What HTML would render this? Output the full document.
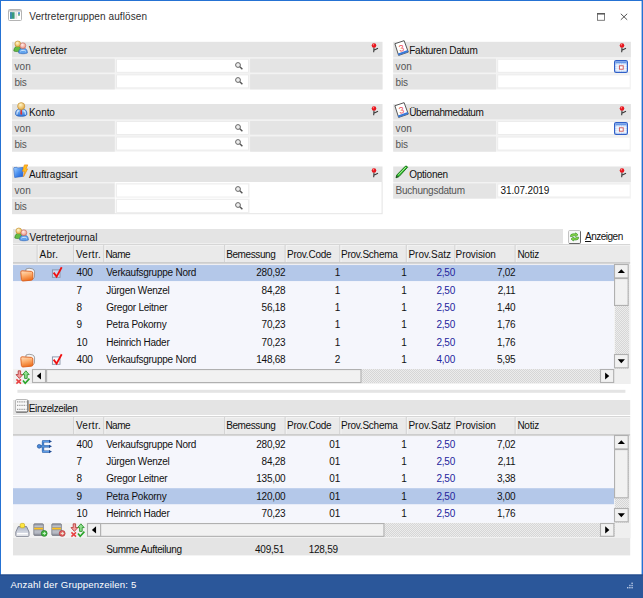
<!DOCTYPE html>
<html><head><meta charset="utf-8"><title>Vertretergruppen auflösen</title>
<style>
html,body{margin:0;padding:0;background:#fff;}
body{width:643px;height:598px;position:relative;overflow:hidden;font-family:"Liberation Sans",sans-serif;}
div,span.t,svg{position:absolute;}
svg{overflow:visible;}
.t{font-size:10px;line-height:12px;letter-spacing:-0.24px;white-space:nowrap;color:#000;}
.blk{color:#111;}
.hd{color:#262626;}
.gry{color:#555;}
.nav{color:#24249c;}
.ttl{font-size:10px;letter-spacing:0.09px;color:#303030;}
.sts{font-size:9.6px;letter-spacing:0.16px;color:#fff;}
u{text-decoration:underline;}
</style></head><body>
<svg style="left:0;top:0" width="643" height="598">
<rect x="0.00" y="0.00" width="643.00" height="1.00" fill="#2572d3"/>
<rect x="0.00" y="0.00" width="1.00" height="598.00" fill="#2572d3"/>
<rect x="641.60" y="0.00" width="1.40" height="598.00" fill="#2572d3"/>
<rect x="0.00" y="574.50" width="643.00" height="23.50" fill="#2b579a"/>
<rect x="0.00" y="574.50" width="643.00" height="1.20" fill="#254c8c"/>
<rect x="12.00" y="57.30" width="370.50" height="32.15" fill="#f3f3f3"/>
<rect x="12.00" y="41.80" width="370.50" height="15.50" fill="#e4e4e4"/>
<rect x="12.00" y="58.70" width="102.80" height="13.80" fill="#e4e4e4"/>
<rect x="116.10" y="58.90" width="132.80" height="13.80" fill="#ececec"/>
<rect x="117.00" y="59.80" width="131.00" height="12.00" fill="#fff"/>
<rect x="250.10" y="58.70" width="132.40" height="13.80" fill="#e4e4e4"/>
<rect x="12.00" y="74.25" width="102.80" height="15.20" fill="#e4e4e4"/>
<rect x="116.10" y="74.45" width="132.80" height="13.80" fill="#ececec"/>
<rect x="117.00" y="75.35" width="131.00" height="12.00" fill="#fff"/>
<rect x="250.10" y="74.25" width="132.40" height="15.20" fill="#e4e4e4"/>
<rect x="12.00" y="119.50" width="370.50" height="32.15" fill="#f3f3f3"/>
<rect x="12.00" y="104.00" width="370.50" height="15.50" fill="#e4e4e4"/>
<rect x="12.00" y="120.90" width="102.80" height="13.80" fill="#e4e4e4"/>
<rect x="116.10" y="121.10" width="132.80" height="13.80" fill="#ececec"/>
<rect x="117.00" y="122.00" width="131.00" height="12.00" fill="#fff"/>
<rect x="250.10" y="120.90" width="132.40" height="13.80" fill="#e4e4e4"/>
<rect x="12.00" y="136.45" width="102.80" height="15.20" fill="#e4e4e4"/>
<rect x="116.10" y="136.65" width="132.80" height="13.80" fill="#ececec"/>
<rect x="117.00" y="137.55" width="131.00" height="12.00" fill="#fff"/>
<rect x="250.10" y="136.45" width="132.40" height="15.20" fill="#e4e4e4"/>
<rect x="12.00" y="182.00" width="370.50" height="32.15" fill="#f3f3f3"/>
<rect x="12.00" y="166.50" width="370.50" height="15.50" fill="#e4e4e4"/>
<rect x="12.00" y="183.40" width="102.80" height="13.80" fill="#e4e4e4"/>
<rect x="114.80" y="182.00" width="267.70" height="32.15" fill="#e3e3e3"/>
<rect x="114.80" y="182.00" width="266.80" height="31.25" fill="#fff"/>
<rect x="115.70" y="183.20" width="133.80" height="14.40" fill="#efefef"/>
<rect x="117.00" y="184.50" width="131.00" height="12.00" fill="#fff"/>
<rect x="12.00" y="198.95" width="102.80" height="15.20" fill="#e4e4e4"/>
<rect x="115.70" y="198.75" width="133.80" height="14.40" fill="#efefef"/>
<rect x="117.00" y="200.05" width="131.00" height="12.00" fill="#fff"/>
<rect x="393.20" y="57.30" width="237.70" height="32.15" fill="#f3f3f3"/>
<rect x="393.20" y="41.80" width="237.70" height="15.50" fill="#e4e4e4"/>
<rect x="393.20" y="58.70" width="102.80" height="13.80" fill="#e4e4e4"/>
<rect x="497.30" y="58.90" width="132.40" height="13.80" fill="#ececec"/>
<rect x="498.20" y="59.80" width="131.50" height="12.00" fill="#fff"/>
<rect x="393.20" y="74.25" width="102.80" height="15.20" fill="#e4e4e4"/>
<rect x="497.30" y="74.45" width="132.40" height="13.80" fill="#ececec"/>
<rect x="498.20" y="75.35" width="131.50" height="12.00" fill="#fff"/>
<rect x="393.20" y="119.50" width="237.70" height="32.15" fill="#f3f3f3"/>
<rect x="393.20" y="104.00" width="237.70" height="15.50" fill="#e4e4e4"/>
<rect x="393.20" y="120.90" width="102.80" height="13.80" fill="#e4e4e4"/>
<rect x="497.30" y="121.10" width="132.40" height="13.80" fill="#ececec"/>
<rect x="498.20" y="122.00" width="131.50" height="12.00" fill="#fff"/>
<rect x="393.20" y="136.45" width="102.80" height="15.20" fill="#e4e4e4"/>
<rect x="497.30" y="136.65" width="132.40" height="13.80" fill="#ececec"/>
<rect x="498.20" y="137.55" width="131.50" height="12.00" fill="#fff"/>
<rect x="393.20" y="182.00" width="237.70" height="16.60" fill="#f3f3f3"/>
<rect x="393.20" y="166.50" width="237.70" height="15.50" fill="#e4e4e4"/>
<rect x="393.20" y="183.40" width="102.80" height="15.20" fill="#e4e4e4"/>
<rect x="497.30" y="183.60" width="132.40" height="13.80" fill="#ececec"/>
<rect x="498.20" y="184.50" width="131.50" height="12.00" fill="#fff"/>
<rect x="13.00" y="229.00" width="550.00" height="14.60" fill="#e4e4e4"/>
<rect x="13.00" y="244.00" width="617.20" height="1.00" fill="#d6d6d6"/>
<rect x="13.00" y="245.00" width="617.20" height="17.00" fill="#eaeaea"/>
<rect x="13.00" y="245.00" width="617.20" height="1.00" fill="#f2f2f2"/>
<rect x="13.00" y="262.00" width="617.20" height="1.00" fill="#cdcdcd"/>
<rect x="13.00" y="263.00" width="617.20" height="1.00" fill="#d6d6d6"/>
<rect x="13.00" y="264.00" width="617.20" height="1.00" fill="#eeeef2"/>
<rect x="36.70" y="245.00" width="1.00" height="17.00" fill="#cbcbcb"/>
<rect x="37.70" y="245.00" width="1.00" height="17.00" fill="#f4f4f4"/>
<rect x="73.30" y="245.00" width="1.00" height="17.00" fill="#cbcbcb"/>
<rect x="74.30" y="245.00" width="1.00" height="17.00" fill="#f4f4f4"/>
<rect x="103.40" y="245.00" width="1.00" height="17.00" fill="#cbcbcb"/>
<rect x="104.40" y="245.00" width="1.00" height="17.00" fill="#f4f4f4"/>
<rect x="224.30" y="245.00" width="1.00" height="17.00" fill="#cbcbcb"/>
<rect x="225.30" y="245.00" width="1.00" height="17.00" fill="#f4f4f4"/>
<rect x="284.70" y="245.00" width="1.00" height="17.00" fill="#cbcbcb"/>
<rect x="285.70" y="245.00" width="1.00" height="17.00" fill="#f4f4f4"/>
<rect x="339.40" y="245.00" width="1.00" height="17.00" fill="#cbcbcb"/>
<rect x="340.40" y="245.00" width="1.00" height="17.00" fill="#f4f4f4"/>
<rect x="405.80" y="245.00" width="1.00" height="17.00" fill="#cbcbcb"/>
<rect x="406.80" y="245.00" width="1.00" height="17.00" fill="#f4f4f4"/>
<rect x="454.50" y="245.00" width="1.00" height="17.00" fill="#cbcbcb"/>
<rect x="455.50" y="245.00" width="1.00" height="17.00" fill="#f4f4f4"/>
<rect x="514.70" y="245.00" width="1.00" height="17.00" fill="#cbcbcb"/>
<rect x="515.70" y="245.00" width="1.00" height="17.00" fill="#f4f4f4"/>
<rect x="13.00" y="265.05" width="601.20" height="103.92" fill="#f5f6fc"/>
<rect x="13.00" y="265.05" width="601.20" height="16.00" fill="#b4c8e9"/>
<rect x="614.20" y="265.05" width="16.40" height="103.92" fill="#f0f0f0"/>
<rect x="13.00" y="368.97" width="617.20" height="15.00" fill="#f1f1f1"/>
<rect x="614.20" y="368.97" width="16.40" height="15.00" fill="#efefef"/>
<rect x="17.40" y="389.80" width="608.00" height="3.00" fill="#e4e4e4"/>
<rect x="13.00" y="400.00" width="617.20" height="15.00" fill="#e4e4e4"/>
<rect x="13.00" y="416.00" width="617.20" height="1.00" fill="#d6d6d6"/>
<rect x="13.00" y="417.00" width="617.20" height="17.00" fill="#eaeaea"/>
<rect x="13.00" y="417.00" width="617.20" height="1.00" fill="#f2f2f2"/>
<rect x="13.00" y="434.00" width="617.20" height="1.00" fill="#cdcdcd"/>
<rect x="13.00" y="435.00" width="617.20" height="1.00" fill="#d6d6d6"/>
<rect x="13.00" y="436.00" width="617.20" height="1.00" fill="#eeeef2"/>
<rect x="73.30" y="417.00" width="1.00" height="17.00" fill="#cbcbcb"/>
<rect x="74.30" y="417.00" width="1.00" height="17.00" fill="#f4f4f4"/>
<rect x="103.40" y="417.00" width="1.00" height="17.00" fill="#cbcbcb"/>
<rect x="104.40" y="417.00" width="1.00" height="17.00" fill="#f4f4f4"/>
<rect x="224.30" y="417.00" width="1.00" height="17.00" fill="#cbcbcb"/>
<rect x="225.30" y="417.00" width="1.00" height="17.00" fill="#f4f4f4"/>
<rect x="284.70" y="417.00" width="1.00" height="17.00" fill="#cbcbcb"/>
<rect x="285.70" y="417.00" width="1.00" height="17.00" fill="#f4f4f4"/>
<rect x="339.40" y="417.00" width="1.00" height="17.00" fill="#cbcbcb"/>
<rect x="340.40" y="417.00" width="1.00" height="17.00" fill="#f4f4f4"/>
<rect x="405.80" y="417.00" width="1.00" height="17.00" fill="#cbcbcb"/>
<rect x="406.80" y="417.00" width="1.00" height="17.00" fill="#f4f4f4"/>
<rect x="454.50" y="417.00" width="1.00" height="17.00" fill="#cbcbcb"/>
<rect x="455.50" y="417.00" width="1.00" height="17.00" fill="#f4f4f4"/>
<rect x="514.70" y="417.00" width="1.00" height="17.00" fill="#cbcbcb"/>
<rect x="515.70" y="417.00" width="1.00" height="17.00" fill="#f4f4f4"/>
<rect x="13.00" y="436.25" width="601.20" height="86.60" fill="#f5f6fc"/>
<rect x="13.00" y="488.21" width="601.20" height="16.00" fill="#b4c8e9"/>
<rect x="614.20" y="436.25" width="16.40" height="86.60" fill="#f0f0f0"/>
<rect x="13.00" y="522.85" width="617.20" height="15.40" fill="#f1f1f1"/>
<rect x="614.20" y="522.85" width="16.40" height="15.40" fill="#efefef"/>
<rect x="13.00" y="538.00" width="617.20" height="17.40" fill="#e4e4e4"/>
</svg>
<svg style="left:8.2px;top:9.3px" width="14" height="12" viewBox="0 0 14 12">
<rect x="0.5" y="0.5" width="13" height="11" rx="1" fill="#fff" stroke="#b4b4b4"/>
<rect x="1" y="1" width="12" height="1.6" fill="#c8c8c8"/>
<rect x="2" y="3.2" width="4.6" height="6.6" fill="#3a9a7a"/>
<rect x="2" y="3.2" width="2" height="6.6" fill="#3f86c4" opacity=".7"/>
<rect x="7.4" y="3.2" width="1.8" height="6.6" fill="#e2e2e2"/>
<rect x="10" y="3.2" width="2" height="3.2" fill="#5b95cf"/>
<rect x="10" y="5.2" width="2" height="1.4" fill="#7cc080"/>
</svg>
<span class="t ttl" style="left:29.2px;top:10.80px;">Vertretergruppen auflösen</span>
<svg style="left:596px;top:12px" width="10" height="10" viewBox="0 0 10 10"><rect x="1.5" y="1.7" width="7" height="6.6" fill="none" stroke="#707070" stroke-width=".9"/><rect x="1" y="1" width="8" height="1.5" fill="#5a5a5a"/></svg>
<svg style="left:619px;top:12px" width="10" height="10" viewBox="0 0 10 10"><path d="M1.8 1.8 L8.2 7.8 M8.2 1.8 L1.8 7.8" stroke="#555" stroke-width="1" fill="none"/></svg>
<svg style="left:13.1px;top:39.9px" width="15" height="14" viewBox="0 0 15 14">
<defs>
<radialGradient id="gy" cx=".4" cy=".35" r=".7"><stop offset="0" stop-color="#fff8d0"/><stop offset="1" stop-color="#e6aa3c"/></radialGradient>
<radialGradient id="gp" cx=".4" cy=".35" r=".7"><stop offset="0" stop-color="#fff0ec"/><stop offset="1" stop-color="#ea8c7c"/></radialGradient>
</defs>
<path d="M0.8 11 C0.8 7.6 2.8 6.2 4.8 6.2 C6.8 6.2 8 7.6 8 11 C6.4 11.8 2.4 11.8 0.8 11Z" fill="#62bc44" stroke="#2f7a22" stroke-width=".6"/>
<circle cx="4.8" cy="3.9" r="2.9" fill="url(#gy)" stroke="#c08c2a" stroke-width=".6"/>
<path d="M5.6 13 C5.6 9.4 7.6 8 10 8 C12.4 8 14.4 9.4 14.4 13 C12.2 14 7.8 14 5.6 13Z" fill="#62a4ee" stroke="#2a5fb4" stroke-width=".6"/>
<path d="M7.4 11.2 C8.8 10 11.4 10 12.8 11.2" stroke="#cfe8ff" stroke-width="1" fill="none"/>
<circle cx="9.9" cy="5.7" r="2.9" fill="url(#gp)" stroke="#c86a5a" stroke-width=".6"/>
</svg>
<span class="t blk" style="left:29px;top:44.60px;letter-spacing:-0.02px;">Vertreter</span>
<svg style="left:370px;top:41.4px" width="10" height="12" viewBox="0 0 10 12">
<path d="M4 6.4 L3.7 11.2 M3.8 9.2 L8 7.2" stroke="#3a3a3a" stroke-width="1.1" fill="none"/>
<circle cx="4" cy="4.5" r="2.3" fill="#e8141c"/>
<circle cx="3.4" cy="3.8" r=".8" fill="#ff8a8a"/>
</svg>
<span class="t gry" style="left:14.4px;top:60.50px;letter-spacing:0.1px;">von</span>
<svg style="left:233.7px;top:60.599999999999994px" width="10" height="10" viewBox="0 0 10 10">
<circle cx="4" cy="4" r="2.4" fill="#eee" stroke="#666" stroke-width="1"/>
<path d="M5.8 5.8 L8.4 8.2" stroke="#555" stroke-width="1.5"/>
</svg>
<span class="t gry" style="left:14.4px;top:76.55px;">bis</span>
<svg style="left:233.7px;top:76.15px" width="10" height="10" viewBox="0 0 10 10">
<circle cx="4" cy="4" r="2.4" fill="#eee" stroke="#666" stroke-width="1"/>
<path d="M5.8 5.8 L8.4 8.2" stroke="#555" stroke-width="1.5"/>
</svg>
<svg style="left:14px;top:102.2px" width="15" height="15" viewBox="0 0 15 15">
<defs>
<radialGradient id="gk" cx=".4" cy=".3" r=".75"><stop offset="0" stop-color="#fff6c8"/><stop offset="1" stop-color="#e2a23a"/></radialGradient>
<linearGradient id="gb" x1="0" y1="0" x2="0" y2="1"><stop offset="0" stop-color="#a8d6ff"/><stop offset="1" stop-color="#2a6fd6"/></linearGradient>
</defs>
<path d="M1.6 12.4 C1.2 8.4 3.4 6.8 7.2 6.8 C11 6.8 13.2 8.4 12.8 12.4 C12.4 15 2 15 1.6 12.4Z" fill="url(#gb)" stroke="#2a5fb4" stroke-width=".7"/>
<path d="M3 12.6 C2.8 10.4 3.6 9 5 8.6 M11.4 12.6 C11.6 10.4 10.8 9 9.4 8.6" stroke="#e4f2ff" stroke-width="1.1" fill="none" opacity=".8"/>
<path d="M6.5 7.8 L7.9 7.8 L8.1 12 L7.2 13 L6.3 12Z" fill="#e03030"/>
<circle cx="7.2" cy="4.2" r="3.6" fill="url(#gk)" stroke="#c08a2a" stroke-width=".6"/>
</svg>
<span class="t blk" style="left:29px;top:106.80px;letter-spacing:-0.05px;">Konto</span>
<svg style="left:370px;top:103.6px" width="10" height="12" viewBox="0 0 10 12">
<path d="M4 6.4 L3.7 11.2 M3.8 9.2 L8 7.2" stroke="#3a3a3a" stroke-width="1.1" fill="none"/>
<circle cx="4" cy="4.5" r="2.3" fill="#e8141c"/>
<circle cx="3.4" cy="3.8" r=".8" fill="#ff8a8a"/>
</svg>
<span class="t gry" style="left:14.4px;top:122.70px;letter-spacing:0.1px;">von</span>
<svg style="left:233.7px;top:122.80000000000001px" width="10" height="10" viewBox="0 0 10 10">
<circle cx="4" cy="4" r="2.4" fill="#eee" stroke="#666" stroke-width="1"/>
<path d="M5.8 5.8 L8.4 8.2" stroke="#555" stroke-width="1.5"/>
</svg>
<span class="t gry" style="left:14.4px;top:138.75px;">bis</span>
<svg style="left:233.7px;top:138.35000000000002px" width="10" height="10" viewBox="0 0 10 10">
<circle cx="4" cy="4" r="2.4" fill="#eee" stroke="#666" stroke-width="1"/>
<path d="M5.8 5.8 L8.4 8.2" stroke="#555" stroke-width="1.5"/>
</svg>
<svg style="left:13px;top:164.4px" width="16" height="15" viewBox="0 0 16 15">
<defs><linearGradient id="gf" x1="0" y1="0" x2="1" y2="1"><stop offset="0" stop-color="#a8d4ff"/><stop offset=".5" stop-color="#4a90f0"/><stop offset="1" stop-color="#1858d0"/></linearGradient></defs>
<path d="M0.7 4.6 L1 3.6 L4 3.3 L4.8 4 L10 3.4 L9.8 12.4 L1.7 13.5Z" fill="url(#gf)" stroke="#2a62c0" stroke-width=".6" stroke-linejoin="round"/>
<path d="M11.4 0.9 L14.8 0.9 L12.9 4.9 L14.6 4.9 L10.5 12.8 L11.5 7.3 L9.5 7.3Z" fill="#ffc21e" stroke="#ee8a12" stroke-width=".7" stroke-linejoin="round"/>
</svg>
<span class="t blk" style="left:29px;top:169.30px;letter-spacing:-0.05px;">Auftragsart</span>
<svg style="left:370px;top:166.1px" width="10" height="12" viewBox="0 0 10 12">
<path d="M4 6.4 L3.7 11.2 M3.8 9.2 L8 7.2" stroke="#3a3a3a" stroke-width="1.1" fill="none"/>
<circle cx="4" cy="4.5" r="2.3" fill="#e8141c"/>
<circle cx="3.4" cy="3.8" r=".8" fill="#ff8a8a"/>
</svg>
<span class="t gry" style="left:14.4px;top:185.20px;letter-spacing:0.1px;">von</span>
<svg style="left:233.7px;top:185.3px" width="10" height="10" viewBox="0 0 10 10">
<circle cx="4" cy="4" r="2.4" fill="#eee" stroke="#666" stroke-width="1"/>
<path d="M5.8 5.8 L8.4 8.2" stroke="#555" stroke-width="1.5"/>
</svg>
<span class="t gry" style="left:14.4px;top:201.25px;">bis</span>
<svg style="left:233.7px;top:200.85000000000002px" width="10" height="10" viewBox="0 0 10 10">
<circle cx="4" cy="4" r="2.4" fill="#eee" stroke="#666" stroke-width="1"/>
<path d="M5.8 5.8 L8.4 8.2" stroke="#555" stroke-width="1.5"/>
</svg>
<svg style="left:394.2px;top:40.2px" width="16.5" height="16.5" viewBox="0 0 15 15">
<path d="M0.8 3.4 L9.2 0.6 L13 11 L4.2 14Z" fill="#fff" stroke="#555" stroke-width=".9" stroke-linejoin="round"/>
<path d="M3.6 12.2 L12.4 9.2 L13 11 L4.2 14Z" fill="#3a7ad8"/>
<text x="4.3" y="10.3" font-family="Liberation Sans, sans-serif" font-size="8.5" fill="#ee5a5a" transform="rotate(-14 7 7)">3</text>
</svg>
<span class="t blk" style="left:409.2px;top:44.60px;">Fakturen Datum</span>
<svg style="left:618px;top:41.4px" width="10" height="12" viewBox="0 0 10 12">
<path d="M4 6.4 L3.7 11.2 M3.8 9.2 L8 7.2" stroke="#3a3a3a" stroke-width="1.1" fill="none"/>
<circle cx="4" cy="4.5" r="2.3" fill="#e8141c"/>
<circle cx="3.4" cy="3.8" r=".8" fill="#ff8a8a"/>
</svg>
<span class="t gry" style="left:395.59999999999997px;top:60.50px;letter-spacing:0.1px;">von</span>
<svg style="left:613.7px;top:59.8px" width="14" height="13" viewBox="0 0 14 13">
<rect x=".6" y=".6" width="12.8" height="11.8" rx="1.5" fill="#d4e4fb" stroke="#3060c8" stroke-width="1.2"/>
<rect x="1.4" y="1.4" width="11.2" height="2" fill="#6a9ae8"/>
<path d="M4 3.4V11.6M6.4 3.4V11.6M8.8 3.4V11.6M11 3.4V11.6M1.4 5.6H12.6M1.4 7.6H12.6M1.4 9.6H12.6" stroke="#fff" stroke-width=".6"/>
<rect x="5.4" y="5.8" width="3.8" height="3.4" fill="#fff" stroke="#cc5050" stroke-width=".9"/>
</svg>
<span class="t gry" style="left:395.59999999999997px;top:76.55px;">bis</span>
<svg style="left:394.2px;top:102.4px" width="16.5" height="16.5" viewBox="0 0 15 15">
<path d="M0.8 3.4 L9.2 0.6 L13 11 L4.2 14Z" fill="#fff" stroke="#555" stroke-width=".9" stroke-linejoin="round"/>
<path d="M3.6 12.2 L12.4 9.2 L13 11 L4.2 14Z" fill="#3a7ad8"/>
<text x="4.3" y="10.3" font-family="Liberation Sans, sans-serif" font-size="8.5" fill="#ee5a5a" transform="rotate(-14 7 7)">3</text>
</svg>
<span class="t blk" style="left:409.2px;top:106.80px;letter-spacing:-0.42px;">Übernahmedatum</span>
<svg style="left:618px;top:103.6px" width="10" height="12" viewBox="0 0 10 12">
<path d="M4 6.4 L3.7 11.2 M3.8 9.2 L8 7.2" stroke="#3a3a3a" stroke-width="1.1" fill="none"/>
<circle cx="4" cy="4.5" r="2.3" fill="#e8141c"/>
<circle cx="3.4" cy="3.8" r=".8" fill="#ff8a8a"/>
</svg>
<span class="t gry" style="left:395.59999999999997px;top:122.70px;letter-spacing:0.1px;">von</span>
<svg style="left:613.7px;top:122.0px" width="14" height="13" viewBox="0 0 14 13">
<rect x=".6" y=".6" width="12.8" height="11.8" rx="1.5" fill="#d4e4fb" stroke="#3060c8" stroke-width="1.2"/>
<rect x="1.4" y="1.4" width="11.2" height="2" fill="#6a9ae8"/>
<path d="M4 3.4V11.6M6.4 3.4V11.6M8.8 3.4V11.6M11 3.4V11.6M1.4 5.6H12.6M1.4 7.6H12.6M1.4 9.6H12.6" stroke="#fff" stroke-width=".6"/>
<rect x="5.4" y="5.8" width="3.8" height="3.4" fill="#fff" stroke="#cc5050" stroke-width=".9"/>
</svg>
<span class="t gry" style="left:395.59999999999997px;top:138.75px;">bis</span>
<svg style="left:394.6px;top:164.6px" width="14" height="14" viewBox="0 0 14 14">
<path d="M1 12.8 L1.8 10 L10.4 1.2 Q11.8 0.6 12.6 2.2 L4 11.6Z" fill="#35c035" stroke="#0b6b0b" stroke-width=".9" stroke-linejoin="round"/>
<path d="M3.4 9.8 L11 2" stroke="#b8f0a0" stroke-width=".9"/>
<path d="M1 12.8 L1.7 10.6 L3 11.8Z" fill="#333"/>
</svg>
<span class="t blk" style="left:409.2px;top:169.30px;">Optionen</span>
<svg style="left:618px;top:166.1px" width="10" height="12" viewBox="0 0 10 12">
<path d="M4 6.4 L3.7 11.2 M3.8 9.2 L8 7.2" stroke="#3a3a3a" stroke-width="1.1" fill="none"/>
<circle cx="4" cy="4.5" r="2.3" fill="#e8141c"/>
<circle cx="3.4" cy="3.8" r=".8" fill="#ff8a8a"/>
</svg>
<span class="t gry" style="left:395.59999999999997px;top:185.20px;">Buchungsdatum</span>
<span class="t blk" style="left:500.59999999999997px;top:185.00px;letter-spacing:-0.15px;">31.07.2019</span>
<svg style="left:14.0px;top:227.2px" width="15" height="14" viewBox="0 0 15 14">
<defs>
<radialGradient id="gy" cx=".4" cy=".35" r=".7"><stop offset="0" stop-color="#fff8d0"/><stop offset="1" stop-color="#e6aa3c"/></radialGradient>
<radialGradient id="gp" cx=".4" cy=".35" r=".7"><stop offset="0" stop-color="#fff0ec"/><stop offset="1" stop-color="#ea8c7c"/></radialGradient>
</defs>
<path d="M0.8 11 C0.8 7.6 2.8 6.2 4.8 6.2 C6.8 6.2 8 7.6 8 11 C6.4 11.8 2.4 11.8 0.8 11Z" fill="#62bc44" stroke="#2f7a22" stroke-width=".6"/>
<circle cx="4.8" cy="3.9" r="2.9" fill="url(#gy)" stroke="#c08c2a" stroke-width=".6"/>
<path d="M5.6 13 C5.6 9.4 7.6 8 10 8 C12.4 8 14.4 9.4 14.4 13 C12.2 14 7.8 14 5.6 13Z" fill="#62a4ee" stroke="#2a5fb4" stroke-width=".6"/>
<path d="M7.4 11.2 C8.8 10 11.4 10 12.8 11.2" stroke="#cfe8ff" stroke-width="1" fill="none"/>
<circle cx="9.9" cy="5.7" r="2.9" fill="url(#gp)" stroke="#c86a5a" stroke-width=".6"/>
</svg>
<span class="t blk" style="left:29.6px;top:231.90px;letter-spacing:-0.04px;">Vertreterjournal</span>
<svg style="left:568.2px;top:229.6px" width="13" height="14" viewBox="0 0 13 14">
<rect x=".5" y=".5" width="12" height="13" rx="1.2" fill="#f7f7f7" stroke="#bcbcbc" stroke-width=".9"/>
<path d="M1.2 13.5 H11.4 Q12.5 13.5 12.5 12.4 V1.4" fill="none" stroke="#666" stroke-width="1"/>
<path d="M2.4 6.6 Q2.2 4 5 3.8 L7.6 3.8 L7.6 2.8 L10 4.8 L7.6 6.8 L7.6 5.8 L5.2 5.8 Q4.4 5.8 4.4 6.6Z" fill="#8ad848" stroke="#2e8a1e" stroke-width=".6"/>
<path d="M10.6 7.2 Q10.8 9.8 8 10 L5.4 10 L5.4 11 L3 9 L5.4 7 L5.4 8 L7.8 8 Q8.6 8 8.6 7.2Z" fill="#8ad848" stroke="#2e8a1e" stroke-width=".6"/>
</svg>
<span class="t blk" style="left:585px;top:231.30px;letter-spacing:-0.5px;"><u>A</u>nzeigen</span>
<span class="t blk" style="left:39.6px;top:248.70px;letter-spacing:0.2px;">Abr.</span>
<span class="t blk" style="left:75.9px;top:248.70px;letter-spacing:0.3px;">Vertr.</span>
<span class="t blk" style="left:105.4px;top:248.70px;letter-spacing:-0.5px;">Name</span>
<span class="t blk" style="left:226.2px;top:248.70px;letter-spacing:-0.4px;">Bemessung</span>
<span class="t blk" style="left:287px;top:248.70px;">Prov.Code</span>
<span class="t blk" style="left:341px;top:248.70px;">Prov.Schema</span>
<span class="t blk" style="left:408.4px;top:248.70px;letter-spacing:0.0px;">Prov.Satz</span>
<span class="t blk" style="left:455.6px;top:248.70px;letter-spacing:-0.1px;">Provision</span>
<span class="t blk" style="left:517.4px;top:248.70px;">Notiz</span>
<svg style="left:19.6px;top:266.65000000000003px" width="16" height="15" viewBox="0 0 16 15">
<defs><linearGradient id="go" x1="0" y1="0" x2="0.3" y2="1"><stop offset="0" stop-color="#ffe2c4"/><stop offset=".5" stop-color="#fdb070"/><stop offset="1" stop-color="#ee7424"/></linearGradient></defs>
<path d="M6 2 Q9 0.6 12.2 1.8 Q14.6 2.6 14.6 4.8 L14.4 10.2 L12.8 12 L5.4 11Z" fill="#f6f6f6" stroke="#7c7c7c" stroke-width=".7"/>
<path d="M0.8 5.6 Q0.4 4 2 3.8 L11.4 4.4 Q12.8 4.6 12.8 6 L12.9 11.8 Q12.8 13 11.4 13.2 L3 14 Q1.6 14 1.4 12.6Z" fill="url(#go)" stroke="#de5e18" stroke-width=".9"/>
</svg>
<svg style="left:51px;top:266.25px" width="12" height="13" viewBox="0 0 12 13">
<rect x="1.4" y="3.9" width="7.6" height="7.4" fill="#fff" fill-opacity=".3" stroke="#8792a6" stroke-width=".9"/>
<path d="M2.6 6.6 L5.6 10.6 L10.7 1.2" stroke="#f01010" stroke-width="1.8" fill="none" stroke-linejoin="miter"/>
</svg>
<span class="t blk" style="left:76.6px;top:267.45px;">400</span>
<span class="t blk" style="left:106.2px;top:267.45px;">Verkaufsgruppe Nord</span>
<span class="t blk" style="right:357.60px;top:267.45px;">280,92</span>
<span class="t blk" style="right:303.00px;top:267.45px;">1</span>
<span class="t blk" style="right:236.40px;top:267.45px;">1</span>
<span class="t nav" style="right:188.00px;top:267.45px;">2,50</span>
<span class="t blk" style="right:127.60px;top:267.45px;">7,02</span>
<span class="t blk" style="left:76.6px;top:284.77px;">7</span>
<span class="t blk" style="left:106.2px;top:284.77px;">Jürgen Wenzel</span>
<span class="t blk" style="right:357.60px;top:284.77px;">84,28</span>
<span class="t blk" style="right:303.00px;top:284.77px;">1</span>
<span class="t blk" style="right:236.40px;top:284.77px;">1</span>
<span class="t nav" style="right:188.00px;top:284.77px;">2,50</span>
<span class="t blk" style="right:127.60px;top:284.77px;">2,11</span>
<span class="t blk" style="left:76.6px;top:302.09px;">8</span>
<span class="t blk" style="left:106.2px;top:302.09px;">Gregor Leitner</span>
<span class="t blk" style="right:357.60px;top:302.09px;">56,18</span>
<span class="t blk" style="right:303.00px;top:302.09px;">1</span>
<span class="t blk" style="right:236.40px;top:302.09px;">1</span>
<span class="t nav" style="right:188.00px;top:302.09px;">2,50</span>
<span class="t blk" style="right:127.60px;top:302.09px;">1,40</span>
<span class="t blk" style="left:76.6px;top:319.41px;">9</span>
<span class="t blk" style="left:106.2px;top:319.41px;">Petra Pokorny</span>
<span class="t blk" style="right:357.60px;top:319.41px;">70,23</span>
<span class="t blk" style="right:303.00px;top:319.41px;">1</span>
<span class="t blk" style="right:236.40px;top:319.41px;">1</span>
<span class="t nav" style="right:188.00px;top:319.41px;">2,50</span>
<span class="t blk" style="right:127.60px;top:319.41px;">1,76</span>
<span class="t blk" style="left:76.6px;top:336.73px;">10</span>
<span class="t blk" style="left:106.2px;top:336.73px;">Heinrich Hader</span>
<span class="t blk" style="right:357.60px;top:336.73px;">70,23</span>
<span class="t blk" style="right:303.00px;top:336.73px;">1</span>
<span class="t blk" style="right:236.40px;top:336.73px;">1</span>
<span class="t nav" style="right:188.00px;top:336.73px;">2,50</span>
<span class="t blk" style="right:127.60px;top:336.73px;">1,76</span>
<svg style="left:19.6px;top:353.25px" width="16" height="15" viewBox="0 0 16 15">
<defs><linearGradient id="go" x1="0" y1="0" x2="0.3" y2="1"><stop offset="0" stop-color="#ffe2c4"/><stop offset=".5" stop-color="#fdb070"/><stop offset="1" stop-color="#ee7424"/></linearGradient></defs>
<path d="M6 2 Q9 0.6 12.2 1.8 Q14.6 2.6 14.6 4.8 L14.4 10.2 L12.8 12 L5.4 11Z" fill="#f6f6f6" stroke="#7c7c7c" stroke-width=".7"/>
<path d="M0.8 5.6 Q0.4 4 2 3.8 L11.4 4.4 Q12.8 4.6 12.8 6 L12.9 11.8 Q12.8 13 11.4 13.2 L3 14 Q1.6 14 1.4 12.6Z" fill="url(#go)" stroke="#de5e18" stroke-width=".9"/>
</svg>
<svg style="left:51px;top:352.84999999999997px" width="12" height="13" viewBox="0 0 12 13">
<rect x="1.4" y="3.9" width="7.6" height="7.4" fill="#fff" fill-opacity=".3" stroke="#8792a6" stroke-width=".9"/>
<path d="M2.6 6.6 L5.6 10.6 L10.7 1.2" stroke="#f01010" stroke-width="1.8" fill="none" stroke-linejoin="miter"/>
</svg>
<span class="t blk" style="left:76.6px;top:354.05px;">400</span>
<span class="t blk" style="left:106.2px;top:354.05px;">Verkaufsgruppe Nord</span>
<span class="t blk" style="right:357.60px;top:354.05px;">148,68</span>
<span class="t blk" style="right:303.00px;top:354.05px;">2</span>
<span class="t blk" style="right:236.40px;top:354.05px;">1</span>
<span class="t nav" style="right:188.00px;top:354.05px;">4,00</span>
<span class="t blk" style="right:127.60px;top:354.05px;">5,95</span>
<div style="left:614.6px;top:265.05px;width:14.2px;height:103.92px;background:repeating-conic-gradient(#d6d6d6 0% 25%, #ececec 0% 50%) 0 0/2px 2px;"></div>
<svg style="left:614.3px;top:263.95px" width="14.7" height="14.4" viewBox="0 0 14.7 14.4"><rect x=".5" y=".5" width="13.7" height="13.4" fill="#f1f1f1" stroke="#b0b0b0" stroke-width="1.1"/><path d="M3.7499999999999996 9.0 L7.35 5.2 L10.95 9.0Z" fill="#000"/></svg>
<svg style="left:614.3px;top:277.75px" width="14.7" height="28" viewBox="0 0 14.7 28"><rect x=".55" y=".55" width="13.60" height="26.90" fill="#f1f1f1" stroke="#b0b0b0" stroke-width="1.1"/></svg>
<svg style="left:614.3px;top:354.47px" width="14.7" height="14.3" viewBox="0 0 14.7 14.3"><rect x=".5" y=".5" width="13.7" height="13.3" fill="#f1f1f1" stroke="#b0b0b0" stroke-width="1.1"/><path d="M3.7499999999999996 5.3500000000000005 L7.35 9.15 L10.95 5.3500000000000005Z" fill="#000"/></svg>
<svg style="left:15.4px;top:369.57000000000005px" width="16" height="15" viewBox="0 0 16 15">
<path d="M3.2 0.8 H5.6 V4.6 H7.8 L4.4 8.4 L1 4.6 H3.2Z" fill="#f4a0a0" stroke="#b03030" stroke-width=".8" stroke-linejoin="round"/>
<path d="M1.4 9.4 L6 13.6 M6 9.4 L1.4 13.6" stroke="#e84040" stroke-width="1.5"/>
<path d="M9.6 8.4 V4.6 H7.6 L10.9 0.8 L14.2 4.6 H12.2 V8.4Z" fill="#90e090" stroke="#1e8a1e" stroke-width=".8" stroke-linejoin="round"/>
<path d="M8 10.4 L10.2 13.2 L14.4 8.6" stroke="#2aa52a" stroke-width="1.6" fill="none"/>
</svg>
<div style="left:32.4px;top:369.07000000000005px;width:582px;height:14px;background:repeating-conic-gradient(#d6d6d6 0% 25%, #ececec 0% 50%) 0 0/2px 2px;"></div>
<svg style="left:32.3px;top:369.07000000000005px" width="14" height="14" viewBox="0 0 14 14"><rect x=".5" y=".5" width="13" height="13" fill="#f1f1f1" stroke="#b0b0b0" stroke-width="1.1"/><path d="M9.0 3.4 L4.8 7.0 L9.0 10.6Z" fill="#000"/></svg>
<svg style="left:45.7px;top:369.07000000000005px" width="315.6" height="14.1" viewBox="0 0 315.6 14.1"><rect x=".55" y=".55" width="314.50" height="13.00" fill="#f1f1f1" stroke="#b0b0b0" stroke-width="1.1"/></svg>
<svg style="left:600px;top:369.07000000000005px" width="14.2" height="14" viewBox="0 0 14.2 14"><rect x=".5" y=".5" width="13.2" height="13" fill="#f1f1f1" stroke="#b0b0b0" stroke-width="1.1"/><path d="M5.1 3.4 L9.3 7.0 L5.1 10.6Z" fill="#000"/></svg>
<svg style="left:14.8px;top:398.6px" width="13" height="14" viewBox="0 0 13 14">
<rect x=".5" y=".5" width="12.4" height="12.6" rx="1.4" fill="#f8f8f8" stroke="#b0b0b0" stroke-width=".9"/>
<path d="M1.2 13.1 H11.6 Q12.9 13.1 12.9 11.8 V1.4" fill="none" stroke="#5a5a5a" stroke-width="1"/>
<path d="M2 2.9H11.4M2 6.4H11.4M2 10.3H11.4" stroke="#9a9a9a" stroke-width="1.3" stroke-dasharray="1.3 .9"/>
</svg>
<span class="t blk" style="left:28.8px;top:402.50px;letter-spacing:-0.4px;">Einzelzeilen</span>
<span class="t blk" style="left:75.9px;top:419.90px;letter-spacing:0.3px;">Vertr.</span>
<span class="t blk" style="left:105.4px;top:419.90px;letter-spacing:-0.5px;">Name</span>
<span class="t blk" style="left:226.2px;top:419.90px;letter-spacing:-0.4px;">Bemessung</span>
<span class="t blk" style="left:287px;top:419.90px;">Prov.Code</span>
<span class="t blk" style="left:341px;top:419.90px;">Prov.Schema</span>
<span class="t blk" style="left:408.4px;top:419.90px;letter-spacing:0.0px;">Prov.Satz</span>
<span class="t blk" style="left:455.6px;top:419.90px;letter-spacing:-0.1px;">Provision</span>
<span class="t blk" style="left:517.4px;top:419.90px;">Notiz</span>
<svg style="left:37.2px;top:438.85px" width="16" height="15" viewBox="0 0 16 15">
<path d="M2.4 7.3 H6 M6 2.4 V12.6 M5.2 2.4 H13 M6 7.3 H13 M5.2 12.6 H13" stroke="#2a5a9e" stroke-width="2.3" fill="none"/>
<path d="M2.4 7.3 H6 M6 2.4 V12.6 M5.6 2.4 H12.6 M6 7.3 H12.6 M5.6 12.6 H12.6" stroke="#5a9ae6" stroke-width="1.1" fill="none"/>
<circle cx="2.2" cy="7.3" r="1.9" fill="#4a88d8" stroke="#2a5a9e" stroke-width=".7"/>
<path d="M12 0.8 L15 2.4 L12 4Z M12 5.7 L15 7.3 L12 8.9Z M12 11 L15 12.6 L12 14.2Z" fill="#1f4c94"/>
</svg>
<span class="t blk" style="left:76.6px;top:438.65px;">400</span>
<span class="t blk" style="left:106.2px;top:438.65px;">Verkaufsgruppe Nord</span>
<span class="t blk" style="right:357.60px;top:438.65px;">280,92</span>
<span class="t blk" style="right:303.00px;top:438.65px;">01</span>
<span class="t blk" style="right:236.40px;top:438.65px;">1</span>
<span class="t nav" style="right:188.00px;top:438.65px;">2,50</span>
<span class="t blk" style="right:127.60px;top:438.65px;">7,02</span>
<span class="t blk" style="left:76.6px;top:455.97px;">7</span>
<span class="t blk" style="left:106.2px;top:455.97px;">Jürgen Wenzel</span>
<span class="t blk" style="right:357.60px;top:455.97px;">84,28</span>
<span class="t blk" style="right:303.00px;top:455.97px;">01</span>
<span class="t blk" style="right:236.40px;top:455.97px;">1</span>
<span class="t nav" style="right:188.00px;top:455.97px;">2,50</span>
<span class="t blk" style="right:127.60px;top:455.97px;">2,11</span>
<span class="t blk" style="left:76.6px;top:473.29px;">8</span>
<span class="t blk" style="left:106.2px;top:473.29px;">Gregor Leitner</span>
<span class="t blk" style="right:357.60px;top:473.29px;">135,00</span>
<span class="t blk" style="right:303.00px;top:473.29px;">01</span>
<span class="t blk" style="right:236.40px;top:473.29px;">1</span>
<span class="t nav" style="right:188.00px;top:473.29px;">2,50</span>
<span class="t blk" style="right:127.60px;top:473.29px;">3,38</span>
<span class="t blk" style="left:76.6px;top:490.61px;">9</span>
<span class="t blk" style="left:106.2px;top:490.61px;">Petra Pokorny</span>
<span class="t blk" style="right:357.60px;top:490.61px;">120,00</span>
<span class="t blk" style="right:303.00px;top:490.61px;">01</span>
<span class="t blk" style="right:236.40px;top:490.61px;">1</span>
<span class="t nav" style="right:188.00px;top:490.61px;">2,50</span>
<span class="t blk" style="right:127.60px;top:490.61px;">3,00</span>
<span class="t blk" style="left:76.6px;top:507.93px;">10</span>
<span class="t blk" style="left:106.2px;top:507.93px;">Heinrich Hader</span>
<span class="t blk" style="right:357.60px;top:507.93px;">70,23</span>
<span class="t blk" style="right:303.00px;top:507.93px;">01</span>
<span class="t blk" style="right:236.40px;top:507.93px;">1</span>
<span class="t nav" style="right:188.00px;top:507.93px;">2,50</span>
<span class="t blk" style="right:127.60px;top:507.93px;">1,76</span>
<div style="left:614.6px;top:436.25px;width:14.2px;height:86.6px;background:repeating-conic-gradient(#d6d6d6 0% 25%, #ececec 0% 50%) 0 0/2px 2px;"></div>
<svg style="left:614.3px;top:435.15px" width="14.7" height="14.4" viewBox="0 0 14.7 14.4"><rect x=".5" y=".5" width="13.7" height="13.4" fill="#f1f1f1" stroke="#b0b0b0" stroke-width="1.1"/><path d="M3.7499999999999996 9.0 L7.35 5.2 L10.95 9.0Z" fill="#000"/></svg>
<svg style="left:614.3px;top:448.95px" width="14.7" height="49.4" viewBox="0 0 14.7 49.4"><rect x=".55" y=".55" width="13.60" height="48.30" fill="#f1f1f1" stroke="#b0b0b0" stroke-width="1.1"/></svg>
<svg style="left:614.3px;top:508.35px" width="14.7" height="14.3" viewBox="0 0 14.7 14.3"><rect x=".5" y=".5" width="13.7" height="13.3" fill="#f1f1f1" stroke="#b0b0b0" stroke-width="1.1"/><path d="M3.7499999999999996 5.3500000000000005 L7.35 9.15 L10.95 5.3500000000000005Z" fill="#000"/></svg>
<svg style="left:15px;top:523.25px" width="15" height="14" viewBox="0 0 15 14">
<defs><linearGradient id="gt" x1="0" y1="0" x2="0" y2="1"><stop offset="0" stop-color="#aab2c4"/><stop offset=".6" stop-color="#d4d8e2"/><stop offset="1" stop-color="#f4f4f6"/></linearGradient></defs>
<path d="M0.8 9 L3.2 3.6 H11.6 L14 9 V12.4 Q14 13.4 13 13.4 H1.8 Q0.8 13.4 0.8 12.4Z" fill="url(#gt)" stroke="#6e7484" stroke-width=".8" stroke-linejoin="round"/>
<path d="M2 10.6 H12.8" stroke="#fff" stroke-width="1.2"/>
<rect x="5.2" y="0.4" width="4.4" height="4.4" rx="1.4" fill="#ffe640" stroke="#c8a800" stroke-width=".6"/>
</svg>
<svg style="left:33.2px;top:523.45px" width="15" height="14" viewBox="0 0 15 14">
<defs><linearGradient id="gs" x1="0" y1="0" x2="0" y2="1"><stop offset="0" stop-color="#8a8e9a"/><stop offset=".25" stop-color="#c4c8d0"/><stop offset=".8" stop-color="#b4b8c2"/><stop offset="1" stop-color="#80848e"/></linearGradient></defs>
<rect x="0.8" y="0.8" width="9.6" height="11.6" rx=".8" fill="url(#gs)" stroke="#6a6e78" stroke-width=".7"/>
<rect x="1.2" y="4.6" width="8.8" height="2" fill="#ffc21e"/>
<path d="M1.2 4.4H10M1.2 6.8H10" stroke="#777" stroke-width=".5"/>
<circle cx="11.2" cy="10.4" r="2.9" fill="#46b846" stroke="#1e7a1e" stroke-width=".7"/>
<path d="M9.8 10.4H12 M11.2 9.2 L12.6 10.4 L11.2 11.6" stroke="#e8ffe8" stroke-width=".9" fill="none"/>
</svg>
<svg style="left:51.2px;top:523.45px" width="15" height="14" viewBox="0 0 15 14">
<defs><linearGradient id="gs" x1="0" y1="0" x2="0" y2="1"><stop offset="0" stop-color="#8a8e9a"/><stop offset=".25" stop-color="#c4c8d0"/><stop offset=".8" stop-color="#b4b8c2"/><stop offset="1" stop-color="#80848e"/></linearGradient></defs>
<rect x="0.8" y="0.8" width="9.6" height="11.6" rx=".8" fill="url(#gs)" stroke="#6a6e78" stroke-width=".7"/>
<rect x="1.2" y="4.6" width="8.8" height="2" fill="#ffc21e"/>
<path d="M1.2 4.4H10M1.2 6.8H10" stroke="#777" stroke-width=".5"/>
<circle cx="11.2" cy="10.4" r="2.9" fill="#e86a6a" stroke="#a83030" stroke-width=".7"/>
<path d="M9.8 10.4H12 M11.2 9.2 L12.6 10.4 L11.2 11.6" stroke="#e8ffe8" stroke-width=".9" fill="none"/>
</svg>
<svg style="left:69.8px;top:523.0500000000001px" width="16" height="15" viewBox="0 0 16 15">
<path d="M3.2 0.8 H5.6 V4.6 H7.8 L4.4 8.4 L1 4.6 H3.2Z" fill="#f4a0a0" stroke="#b03030" stroke-width=".8" stroke-linejoin="round"/>
<path d="M1.4 9.4 L6 13.6 M6 9.4 L1.4 13.6" stroke="#e84040" stroke-width="1.5"/>
<path d="M9.6 8.4 V4.6 H7.6 L10.9 0.8 L14.2 4.6 H12.2 V8.4Z" fill="#90e090" stroke="#1e8a1e" stroke-width=".8" stroke-linejoin="round"/>
<path d="M8 10.4 L10.2 13.2 L14.4 8.6" stroke="#2aa52a" stroke-width="1.6" fill="none"/>
</svg>
<div style="left:86.6px;top:522.95px;width:528px;height:14px;background:repeating-conic-gradient(#d6d6d6 0% 25%, #ececec 0% 50%) 0 0/2px 2px;"></div>
<svg style="left:86.6px;top:522.95px" width="14.2" height="13.8" viewBox="0 0 14.2 13.8"><rect x=".5" y=".5" width="13.2" height="12.8" fill="#f1f1f1" stroke="#b0b0b0" stroke-width="1.1"/><path d="M9.1 3.3000000000000003 L4.8999999999999995 6.9 L9.1 10.5Z" fill="#000"/></svg>
<svg style="left:100.2px;top:522.95px" width="284.6" height="13.9" viewBox="0 0 284.6 13.9"><rect x=".55" y=".55" width="283.50" height="12.80" fill="#f1f1f1" stroke="#b0b0b0" stroke-width="1.1"/></svg>
<svg style="left:600px;top:522.95px" width="14.4" height="13.8" viewBox="0 0 14.4 13.8"><rect x=".5" y=".5" width="13.4" height="12.8" fill="#f1f1f1" stroke="#b0b0b0" stroke-width="1.1"/><path d="M5.2 3.3000000000000003 L9.4 6.9 L5.2 10.5Z" fill="#000"/></svg>
<span class="t blk" style="left:106.2px;top:543.50px;letter-spacing:-0.35px;">Summe Aufteilung</span>
<span class="t blk" style="right:358.80px;top:543.50px;">409,51</span>
<span class="t blk" style="right:305.20px;top:543.50px;">128,59</span>
<span class="t sts" style="left:10.5px;top:578.80px;">Anzahl der Gruppenzeilen: 5</span>
<svg style="left:626px;top:582px" width="8" height="8" viewBox="0 0 8 8"><g fill="#b8c8e4"><rect x="5.4" y="0.6" width="1.4" height="1.4"/><rect x="3.2" y="2.8" width="1.4" height="1.4"/><rect x="5.4" y="2.8" width="1.4" height="1.4"/><rect x="1" y="5" width="1.4" height="1.4"/><rect x="3.2" y="5" width="1.4" height="1.4"/><rect x="5.4" y="5" width="1.4" height="1.4"/></g></svg>
</body></html>
